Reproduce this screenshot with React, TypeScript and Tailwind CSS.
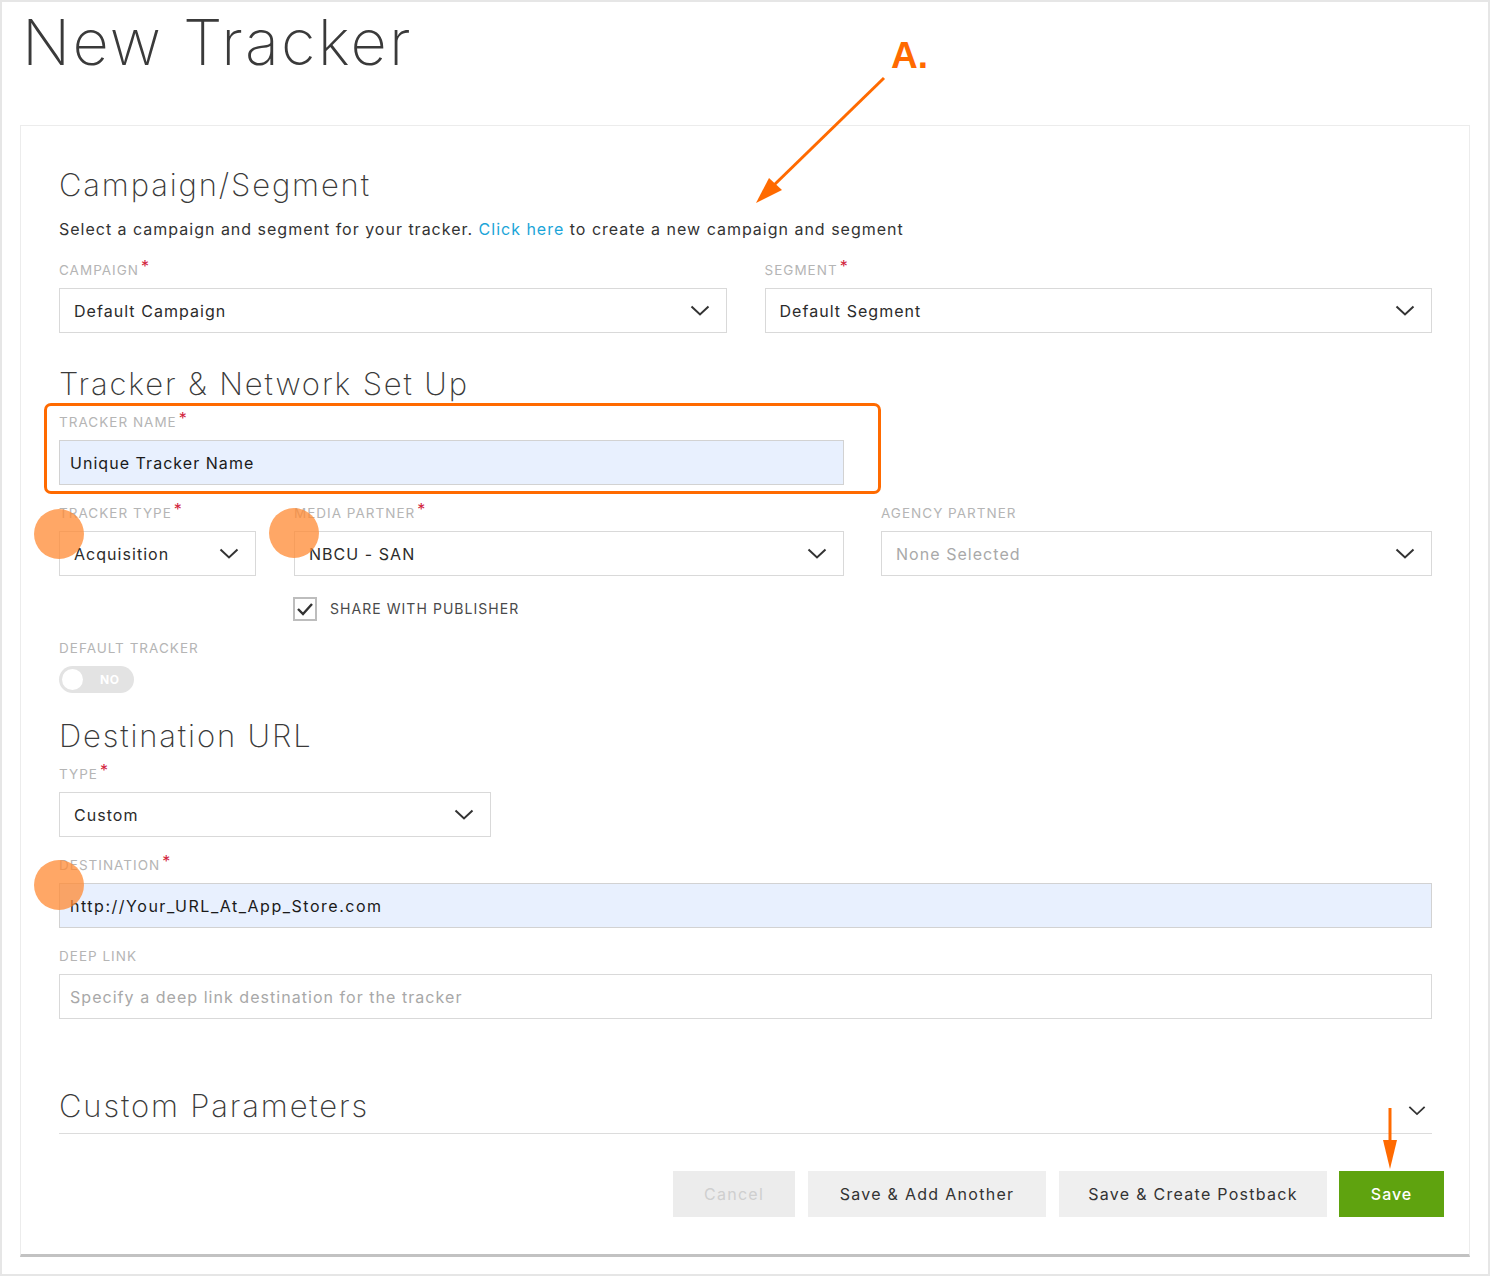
import React from "react";

const Chevron = ({ className = "" }: { className?: string }) => (
  <svg width="20" height="11" viewBox="0 0 20 11" className={className}>
    <polyline points="1.5,1.5 10,9.5 18.5,1.5" fill="none" stroke="#333" strokeWidth="2" />
  </svg>
);

const Label = ({ text, req = false }: { text: string; req?: boolean }) => (
  <div className="h-[18px] flex items-start text-[13.5px] leading-[18px] text-[#b5b5b5] uppercase tracking-[0.075em]">
    <span>{text}</span>
    {req && <span className="text-[#d2233c] text-[16px] leading-[14px] ml-[2px] -mt-[2px]">*</span>}
  </div>
);

const Select = ({ value, w, muted = false }: { value: string; w: string; muted?: boolean }) => (
  <div className={`${w} h-[45px] mt-[9px] border border-[#d9d9d9] bg-white flex items-center justify-between pl-[14px] pr-[16px]`}>
    <span className={`text-[16px] tracking-[0.065em] ${muted ? "text-[#a9a9a9]" : "text-[#2b2b2b]"}`}>{value}</span>
    <Chevron />
  </div>
);

const Heading = ({ text }: { text: string }) => (
  <div className="h-[40px] leading-[40px] text-[31px] font-extralight text-[#3a3a3a] tracking-[0.06em]">{text}</div>
);

export default function App() {
  return (
    <div className="relative w-[1490px] h-[1276px] bg-white border-2 border-[#e6e6e6] font-['Inter','Noto_Sans',sans-serif] overflow-hidden">
      <h1 className="ml-[20px] mt-[8px] h-[64px] leading-[64px] text-[63px] font-extralight text-[#3a3a3a] tracking-[0.035em]">
        New Tracker
      </h1>

      <div className="mx-[18px] mt-[51px] border border-[#ececec] border-b-[3px] border-b-[#c2c2c2] pl-[38px] pr-[37px] pt-[39px] pb-[37px]">
        <Heading text="Campaign/Segment" />
        <div className="mt-[12px] h-[24px] leading-[24px] text-[16px] text-[#333] tracking-[0.062em] whitespace-nowrap">
          Select a campaign and segment for your tracker. <span className="text-[#1ba5d8]">Click here</span> to create a new campaign and segment
        </div>

        <div className="mt-[20px] grid grid-cols-2 gap-x-[38px]">
          <div>
            <Label text="Campaign" req />
            <Select value="Default Campaign" w="w-full" />
          </div>
          <div>
            <Label text="Segment" req />
            <Select value="Default Segment" w="w-full" />
          </div>
        </div>

        <div className="mt-[31px]">
          <Heading text="Tracker & Network Set Up" />
        </div>

        <div className="mt-[9px] w-[785px]">
          <Label text="Tracker Name" req />
          <div className="mt-[9px] h-[45px] border border-[#d2d2d2] bg-[#e8f0fe] flex items-center pl-[10px] text-[16px] text-[#1a1a1a] tracking-[0.065em]">
            Unique Tracker Name
          </div>
        </div>

        <div className="mt-[19px] flex">
          <div className="w-[197px]">
            <Label text="Tracker Type" req />
            <Select value="Acquisition" w="w-full" />
          </div>
          <div className="ml-[38px] w-[550px]">
            <Label text="Media Partner" req />
            <Select value="NBCU - SAN" w="w-full" />
          </div>
          <div className="ml-[37px] flex-1">
            <Label text="Agency Partner" />
            <Select value="None Selected" w="w-full" muted />
          </div>
        </div>

        <div className="mt-[21px] ml-[234px] h-[23px] flex items-center">
          <div className="w-[24px] h-[24px] border-2 border-[#bdbdbd] flex items-center justify-center">
            <svg width="18" height="14" viewBox="0 0 18 14">
              <polyline points="2,7 7,12 16,2" fill="none" stroke="#333" strokeWidth="2.4" />
            </svg>
          </div>
          <span className="ml-[13px] text-[14px] text-[#4a4a4a] tracking-[0.075em]">SHARE WITH PUBLISHER</span>
        </div>

        <div className="mt-[19px]">
          <Label text="Default Tracker" />
          <div className="mt-[9px] w-[75px] h-[27px] rounded-full bg-[#e3e3e3] flex items-center pl-[3px]">
            <div className="w-[21px] h-[21px] rounded-full bg-white" />
            <span className="ml-[17px] text-[12px] font-bold text-white tracking-[0.04em]">NO</span>
          </div>
        </div>

        <div className="mt-[23px]">
          <Heading text="Destination URL" />
        </div>

        <div className="mt-[9px] w-[432px]">
          <Label text="Type" req />
          <Select value="Custom" w="w-full" />
        </div>

        <div className="mt-[19px]">
          <Label text="Destination" req />
          <div className="mt-[9px] h-[45px] border border-[#d2d2d2] bg-[#e8f0fe] flex items-center pl-[10px] text-[16px] text-[#1a1a1a] tracking-[0.095em]">
            http://Your_URL_At_App_Store.com
          </div>
        </div>

        <div className="mt-[19px]">
          <Label text="Deep Link" />
          <div className="mt-[9px] h-[45px] border border-[#d9d9d9] bg-white flex items-center pl-[10px] text-[16px] text-[#a8a8a8] tracking-[0.065em]">
            Specify a deep link destination for the tracker
          </div>
        </div>

        <div className="mt-[67px] pb-[7px] border-b border-[#dcdcdc] flex items-center justify-between">
          <Heading text="Custom Parameters" />
          <Chevron className="mt-[8px] mr-[5px] scale-90" />
        </div>

        <div className="mt-[37px] -mr-[12px] flex justify-end gap-[13px]">
          <button className="w-[122px] h-[46px] bg-[#ececec] text-[#cfcfcf] text-[16px] tracking-[0.08em]">Cancel</button>
          <button className="w-[238px] h-[46px] bg-[#efefef] text-[#333] text-[16px] tracking-[0.08em]">Save &amp; Add Another</button>
          <button className="w-[268px] h-[46px] bg-[#efefef] text-[#333] text-[16px] tracking-[0.08em]">Save &amp; Create Postback</button>
          <button className="w-[105px] h-[46px] bg-[#5fa30f] text-white text-[16px] font-medium tracking-[0.06em] -ml-[1px]">Save</button>
        </div>
      </div>

      {/* Annotations overlay */}
      <div className="absolute left-[42px] top-[401px] w-[837px] h-[91px] border-[3px] border-[#ff6a00] rounded-[7px] pointer-events-none" />
      <div className="absolute left-[32px] top-[507px] w-[50px] h-[50px] rounded-full bg-[#ff8a33]/75 pointer-events-none" />
      <div className="absolute left-[267px] top-[506px] w-[50px] h-[50px] rounded-full bg-[#ff8a33]/75 pointer-events-none" />
      <div className="absolute left-[32px] top-[858px] w-[50px] h-[50px] rounded-full bg-[#ff8a33]/75 pointer-events-none" />
      <div className="absolute left-[889px] top-[30px] text-[37px] font-bold text-[#ff6a00] leading-[48px] font-['Liberation_Sans',sans-serif]">A.</div>
      <svg className="absolute left-[-2px] top-[-2px] pointer-events-none" width="1490" height="1276">
        <line x1="884" y1="78" x2="772" y2="187" stroke="#ff6a00" strokeWidth="3" />
        <polygon points="756,203 769,178 782,190" fill="#ff6a00" />
        <line x1="1390" y1="1108" x2="1390" y2="1142" stroke="#ff6a00" strokeWidth="3" />
        <polygon points="1390,1169 1383,1140 1397,1140" fill="#ff6a00" />
      </svg>
    </div>
  );
}
